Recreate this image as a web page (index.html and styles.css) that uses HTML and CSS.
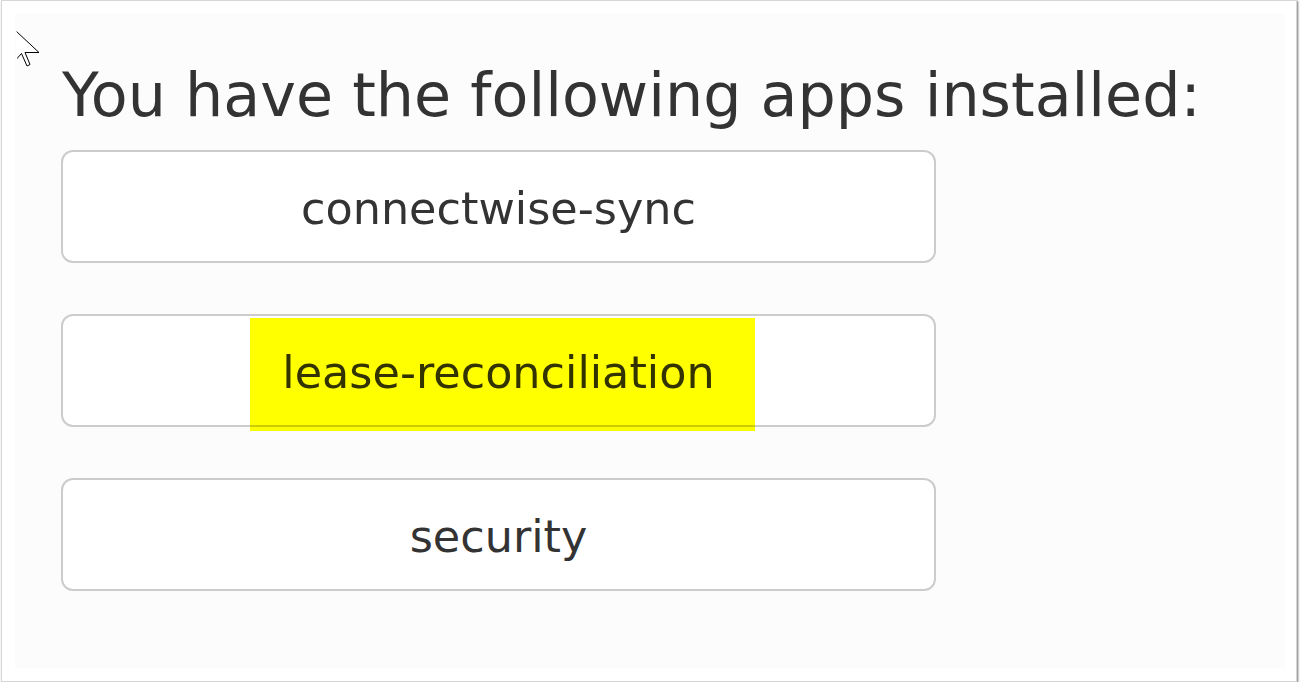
FILE: index.html
```html
<!DOCTYPE html>
<html>
<head>
<meta charset="utf-8">
<title>Installed apps</title>
<link rel="stylesheet" href="styles.css">
</head>
<body>
<div class="frame">
  <svg class="cursor" width="26" height="40" viewBox="0 0 26 40" aria-hidden="true">
    <path d="M0.5 0.5 L0.5 28 L5.5 22.5 L11 35 L14 33.5 L9 21.5 L23 21.5 Z" fill="#fff" stroke="#000" stroke-width="1" stroke-linejoin="miter"/>
    <path d="M0.5 0.5 L0.5 28" stroke="#fff" stroke-width="1.2"/>
  </svg>
  <main class="page">
    <h1 class="title">You have the following apps installed:</h1>
    <ul class="apps">
      <li class="app">connectwise-sync</li>
      <li class="app">lease-reconciliation<span class="highlight"></span></li>
      <li class="app">security</li>
    </ul>
  </main>
</div>
</body>
</html>
```
FILE: styles.css
```css
html, body {
  margin: 0;
  padding: 0;
  background: #ffffff;
}

.frame {
  position: relative;
  box-sizing: border-box;
  width: 1296px;
  height: 682px;
  margin-left: 1px;
  background: #ffffff;
  border: 1px solid #d6d6d6;
  box-shadow: 1px 1px 2px rgba(0, 0, 0, 0.55);
  padding: 13px 0 0 13px;
}

.cursor {
  position: absolute;
  left: 14px;
  top: 30px;
  width: 26px;
  height: 40px;
}

.page {
  box-sizing: border-box;
  width: 1270px;
  height: 654px;
  background: #fcfcfc;
  padding: 46px 0 0 47px;
  font-family: "DejaVu Sans", Verdana, sans-serif;
  color: #333333;
}

.title {
  margin: 0;
  font-size: 60.3px;
  line-height: 70px;
  font-weight: normal;
  white-space: nowrap;
}

.apps {
  list-style: none;
  margin: 20px 0 0 -1px;
  padding: 0;
  display: flex;
  flex-direction: column;
  gap: 51px;
}

.app {
  position: relative;
  box-sizing: border-box;
  width: 875px;
  height: 113px;
  padding-top: 7px;
  background: #ffffff;
  border: 2px solid #cccccc;
  border-radius: 12px;
  font-size: 44.5px;
  line-height: 100px;
  text-align: center;
  white-space: nowrap;
}

.highlight {
  position: absolute;
  left: 187px;
  top: 2px;
  width: 505px;
  height: 113px;
  background: #ffff00;
  mix-blend-mode: multiply;
}
```
